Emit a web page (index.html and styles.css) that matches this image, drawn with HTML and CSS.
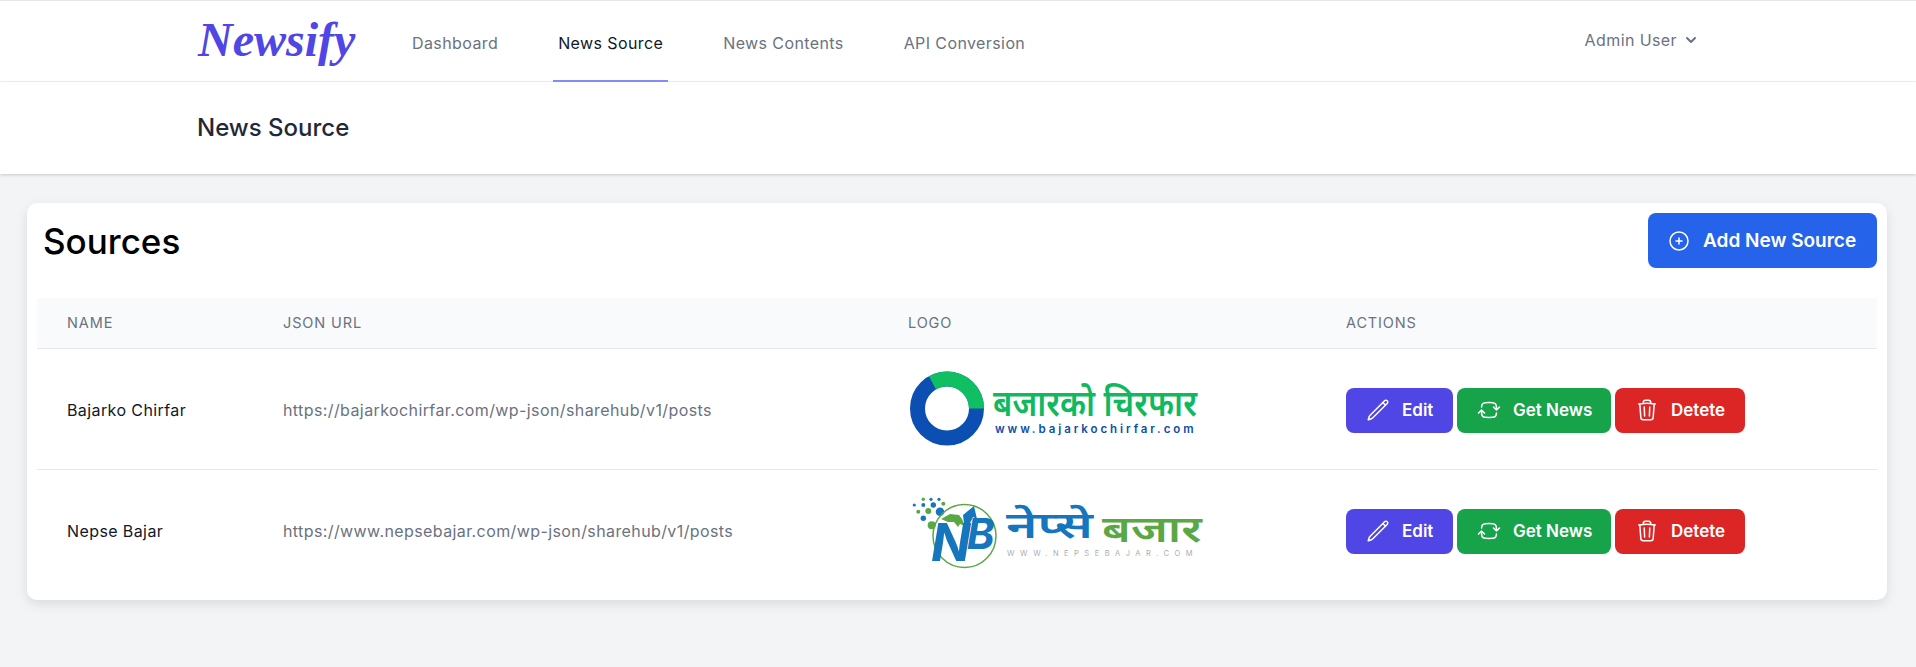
FILE: index.html
```html
<!DOCTYPE html>
<html lang="en">

<head>
    <meta charset="UTF-8">
    <meta name="viewport" content="width=device-width, initial-scale=1.0">
    <title>News Source</title>
    <link rel="stylesheet" href="styles.css">
</head>

<body>
    <nav class="topnav">
        <div class="brand">Newsify</div>
        <div class="nav_links">
            <a class="nav_link">Dashboard</a>
            <a class="nav_link active">News Source</a>
            <a class="nav_link">News Contents</a>
            <a class="nav_link">API Conversion</a>
        </div>
        <div class="user_menu">
            <span>Admin User</span>
            <svg class="chevron" viewBox="0 0 20 20" fill="currentColor">
                <path fill-rule="evenodd" d="M5.293 7.293a1 1 0 011.414 0L10 10.586l3.293-3.293a1 1 0 111.414 1.414l-4 4a1 1 0 01-1.414 0l-4-4a1 1 0 010-1.414z" clip-rule="evenodd"/>
            </svg>
        </div>
    </nav>

    <header class="page_head">
        <h2>News Source</h2>
    </header>

    <main class="content">
        <section class="card">
            <div class="card_head">
                <h1>Sources</h1>
                <button class="btn btn_add">
                    <svg class="icon" viewBox="0 0 24 24"><path d="M12 9v6m3-3H9m12 0a9 9 0 11-18 0 9 9 0 0118 0z"/></svg>
                    Add New Source
                </button>
            </div>
            <table class="sources">
                <thead>
                    <tr>
                        <th class="col_name">Name</th>
                        <th class="col_url">JSON URL</th>
                        <th class="col_logo">Logo</th>
                        <th>Actions</th>
                    </tr>
                </thead>
                <tbody>
                    <tr>
                        <td class="name">Bajarko Chirfar</td>
                        <td>https://bajarkochirfar.com/wp-json/sharehub/v1/posts</td>
                        <td class="logo_cell">
                            <svg class="logo" viewBox="0 -5 340 90">
                                <circle class="ring_blue" cx="42" cy="38.5" r="29.5"/>
                                <path class="ring_green" d="M79 38.5A37 37 0 0 0 24 6.2L31 19.4A22 22 0 0 1 64 38.5Z"/>
                                <text>
                                    <tspan class="logo_np green_text" x="88" y="45.5" textLength="204" lengthAdjust="spacingAndGlyphs">बजारको चिरफार</tspan>
                                    <tspan class="logo_url" x="90" y="62.5" textLength="199">www.bajarkochirfar.com</tspan>
                                </text>
                            </svg>
                        </td>
                        <td>
                            <div class="actions">
                                <button class="btn btn_edit">
                                    <svg class="icon" viewBox="0 0 24 24"><path d="M16.862 4.487l1.687-1.688a1.875 1.875 0 112.652 2.652L6.832 19.82a4.5 4.5 0 01-1.897 1.13l-2.685.8.8-2.685a4.5 4.5 0 011.13-1.897L16.863 4.487zm0 0L19.5 7.125"/></svg>
                                    Edit
                                </button>
                                <button class="btn btn_get">
                                    <svg class="icon" viewBox="0 0 24 24"><path d="M19.5 12c0-1.232-.046-2.453-.138-3.662a4.006 4.006 0 00-3.7-3.7 48.678 48.678 0 00-7.324 0 4.006 4.006 0 00-3.7 3.7c-.017.22-.032.441-.046.662M19.5 12l3-3m-3 3l-3-3m-12 3c0 1.232.046 2.453.138 3.662a4.006 4.006 0 003.7 3.7 48.656 48.656 0 007.324 0 4.006 4.006 0 003.7-3.7c.017-.22.032-.441.046-.662M4.5 12l3 3m-3-3l-3 3"/></svg>
                                    Get News
                                </button>
                                <button class="btn btn_del">
                                    <svg class="icon" viewBox="0 0 24 24"><path d="M14.74 9l-.346 9m-4.788 0L9.26 9m9.968-3.21c.342.052.682.107 1.022.166m-1.022-.165L18.16 19.673a2.25 2.25 0 01-2.244 2.077H8.084a2.25 2.25 0 01-2.244-2.077L4.772 5.79m14.456 0a48.108 48.108 0 00-3.478-.397m-12 .562c.34-.059.68-.114 1.022-.165m0 0a48.11 48.11 0 013.478-.397m7.5 0v-.916c0-1.18-.91-2.164-2.09-2.201a51.964 51.964 0 00-3.32 0c-1.18.037-2.09 1.022-2.09 2.201v.916m7.5 0a48.667 48.667 0 00-7.5 0"/></svg>
                                    Detete
                                </button>
                            </div>
                        </td>
                    </tr>
                    <tr>
                        <td class="name">Nepse Bajar</td>
                        <td>https://www.nepsebajar.com/wp-json/sharehub/v1/posts</td>
                        <td class="logo_cell">
                            <svg class="logo" viewBox="0 -5 340 90">
                                <g class="dots_blue">
                                    <circle cx="9.3" cy="14" r="1.6"/><circle cx="18.3" cy="14" r="2"/><circle cx="26" cy="8.3" r="1.6"/><circle cx="34" cy="8.3" r="1.6"/>
                                    <circle cx="28.3" cy="14" r="2.7"/><circle cx="35" cy="20.7" r="4.3"/><circle cx="18.3" cy="27.3" r="2.7"/>
                                </g>
                                <g class="dots_green">
                                    <circle cx="13.3" cy="20.7" r="2"/><circle cx="23.3" cy="20" r="3"/><circle cx="18.3" cy="8.3" r="1.7"/><circle cx="38.3" cy="12.7" r="2"/><circle cx="26.7" cy="34.3" r="4"/>
                                </g>
                                <circle class="nb_ring" cx="59.5" cy="45" r="31.5"/>
                                <path class="dots_green" d="M36 28l9-5 9 1 3 4 3 7-5-2-2 3-4-5-6 0z"/>
                                <path class="dots_blue" d="M58 24l11-9 3 13-4-2-6 12-3-6z"/>
                                <text class="nb_text" x="26" y="70"><tspan class="nb_n">N</tspan><tspan class="nb_b" dx="-4" dy="-12">B</tspan></text>
                                <text>
                                    <tspan class="logo_np blue_text" x="101" y="47" textLength="87" lengthAdjust="spacingAndGlyphs">नेप्से</tspan>
                                    <tspan class="logo_np lime_text" x="197" y="51" textLength="100" lengthAdjust="spacingAndGlyphs">बजार</tspan>
                                    <tspan class="logo_url_gray" x="102" y="65" textLength="186">WWW.NEPSEBAJAR.COM</tspan>
                                </text>
                            </svg>
                        </td>
                        <td>
                            <div class="actions">
                                <button class="btn btn_edit">
                                    <svg class="icon" viewBox="0 0 24 24"><path d="M16.862 4.487l1.687-1.688a1.875 1.875 0 112.652 2.652L6.832 19.82a4.5 4.5 0 01-1.897 1.13l-2.685.8.8-2.685a4.5 4.5 0 011.13-1.897L16.863 4.487zm0 0L19.5 7.125"/></svg>
                                    Edit
                                </button>
                                <button class="btn btn_get">
                                    <svg class="icon" viewBox="0 0 24 24"><path d="M19.5 12c0-1.232-.046-2.453-.138-3.662a4.006 4.006 0 00-3.7-3.7 48.678 48.678 0 00-7.324 0 4.006 4.006 0 00-3.7 3.7c-.017.22-.032.441-.046.662M19.5 12l3-3m-3 3l-3-3m-12 3c0 1.232.046 2.453.138 3.662a4.006 4.006 0 003.7 3.7 48.656 48.656 0 007.324 0 4.006 4.006 0 003.7-3.7c.017-.22.032-.441.046-.662M4.5 12l3 3m-3-3l-3 3"/></svg>
                                    Get News
                                </button>
                                <button class="btn btn_del">
                                    <svg class="icon" viewBox="0 0 24 24"><path d="M14.74 9l-.346 9m-4.788 0L9.26 9m9.968-3.21c.342.052.682.107 1.022.166m-1.022-.165L18.16 19.673a2.25 2.25 0 01-2.244 2.077H8.084a2.25 2.25 0 01-2.244-2.077L4.772 5.79m14.456 0a48.108 48.108 0 00-3.478-.397m-12 .562c.34-.059.68-.114 1.022-.165m0 0a48.11 48.11 0 013.478-.397m7.5 0v-.916c0-1.18-.91-2.164-2.09-2.201a51.964 51.964 0 00-3.32 0c-1.18.037-2.09 1.022-2.09 2.201v.916m7.5 0a48.667 48.667 0 00-7.5 0"/></svg>
                                    Detete
                                </button>
                            </div>
                        </td>
                    </tr>
                </tbody>
            </table>
        </section>
    </main>
</body>

</html>
```

FILE: styles.css
```css
* {
    box-sizing: border-box;
}

body {
    margin: 0;
    font-family: Inter, "Noto Sans", sans-serif;
    font-size: 16px;
    letter-spacing: 0.4px;
    background-color: #f3f4f6;
    color: #111827;
}

.topnav {
    display: flex;
    align-items: center;
    height: 82px;
    padding: 0 215px 0 198px;
    background-color: #fff;
    border-top: 1px solid #e5e7eb;
    border-bottom: 1px solid #f0f1f3;
}

.brand {
    width: 159px;
    margin-right: 50px;
    margin-bottom: 3px;
    font-family: "Liberation Serif", serif;
    font-style: italic;
    font-weight: 700;
    font-size: 48px;
    letter-spacing: 0;
    color: #4f46e5;
}

.nav_links {
    display: flex;
    align-self: stretch;
    gap: 50px;
}

.nav_link {
    display: flex;
    align-items: center;
    padding: 5px 5px 0;
    margin-bottom: -1px;
    color: #6b7280;
    border-bottom: 2px solid transparent;
}

.nav_link.active {
    color: #111827;
    border-bottom-color: #818cf8;
}

.user_menu {
    display: flex;
    align-items: center;
    gap: 4px;
    margin-left: auto;
    margin-bottom: 3px;
    color: #6b7280;
}

.chevron {
    width: 20px;
    height: 20px;
}

.page_head {
    height: 92px;
    padding: 30px 197px;
    background-color: #fff;
    box-shadow: 0 1px 3px rgba(0, 0, 0, 0.18);
}

.page_head h2 {
    margin: 0;
    font-size: 24px;
    line-height: 32px;
    font-weight: 500;
    letter-spacing: 0;
    color: #1f2937;
}

.content {
    padding: 29px 29px 60px 27px;
}

.card {
    padding: 10px;
    background-color: #fff;
    border-radius: 10px;
    box-shadow: 0 4px 12px rgba(0, 0, 0, 0.1);
}

.card_head {
    display: flex;
    justify-content: space-between;
    align-items: center;
    padding-left: 6px;
    margin-bottom: 30px;
}

.card_head h1 {
    margin: 0;
    font-size: 35px;
    font-weight: 500;
    letter-spacing: 0;
    color: #000;
}

.btn {
    display: inline-flex;
    align-items: center;
    gap: 12px;
    height: 45px;
    padding: 0 20px;
    font-family: inherit;
    font-size: 17px;
    font-weight: 600;
    letter-spacing: 0;
    white-space: nowrap;
    color: #fff;
    border: 0;
    border-radius: 8px;
}

.icon {
    flex-shrink: 0;
    width: 24px;
    height: 24px;
    fill: none;
    stroke: currentColor;
    stroke-width: 1.5;
    stroke-linecap: round;
    stroke-linejoin: round;
}

.btn_add {
    height: 55px;
    width: 229px;
    padding: 0 19px;
    gap: 12px;
    font-size: 19px;
    background-color: #2563eb;
}

.btn_edit {
    width: 107px;
    background-color: #4f46e5;
}

.btn_get {
    width: 154px;
    background-color: #16a34a;
}

.btn_del {
    width: 130px;
    background-color: #dc2626;
}

.sources {
    width: 100%;
    table-layout: fixed;
    border-collapse: collapse;
}

.sources th {
    height: 50px;
    padding: 0 30px;
    text-align: left;
    font-size: 14.5px;
    font-weight: 400;
    letter-spacing: 0.06em;
    text-transform: uppercase;
    color: #6b7280;
    background-color: #f9fafb;
    border-bottom: 1px solid #e5e7eb;
}

.col_name {
    width: 216px;
}

.col_url {
    width: 625px;
}

.col_logo {
    width: 438px;
}

.sources td {
    height: 121px;
    padding: 3px 30px 0;
    color: #6b7280;
    border-bottom: 1px solid #e5e7eb;
}

.sources tbody tr:last-child td {
    border-bottom: 0;
}

.sources td.name {
    color: #111827;
}

.sources td.logo_cell {
    padding: 2px 0 0;
}

.logo {
    display: block;
    width: 340px;
    height: 90px;
    margin-left: 27px;
}

.actions {
    display: flex;
    gap: 4px;
}

.ring_blue {
    fill: none;
    stroke: #0b4fb3;
    stroke-width: 15;
}

.ring_green {
    fill: #0fbf62;
}

.logo_np {
    font-family: "Noto Sans", "Noto Sans Devanagari", sans-serif;
    font-size: 36px;
    font-weight: 600;
    letter-spacing: 0;
}

.green_text {
    fill: #10b860;
}

.blue_text {
    fill: #1576bd;
}

.lime_text {
    fill: #5aa845;
}

.logo_url {
    font-size: 11.5px;
    font-weight: 600;
    fill: #0d4ea6;
}

.logo_url_gray {
    font-size: 7.5px;
    font-weight: 400;
    fill: #a9adb1;
}

.dots_blue {
    fill: #1576bd;
}

.dots_green {
    fill: #5aa845;
}

.nb_ring {
    fill: none;
    stroke: #5aa845;
    stroke-width: 1.5;
}

.nb_text {
    font-weight: 700;
    font-style: italic;
    letter-spacing: 0;
    fill: #1576bd;
}

.nb_n {
    font-size: 52px;
}

.nb_b {
    font-size: 42px;
}
```
